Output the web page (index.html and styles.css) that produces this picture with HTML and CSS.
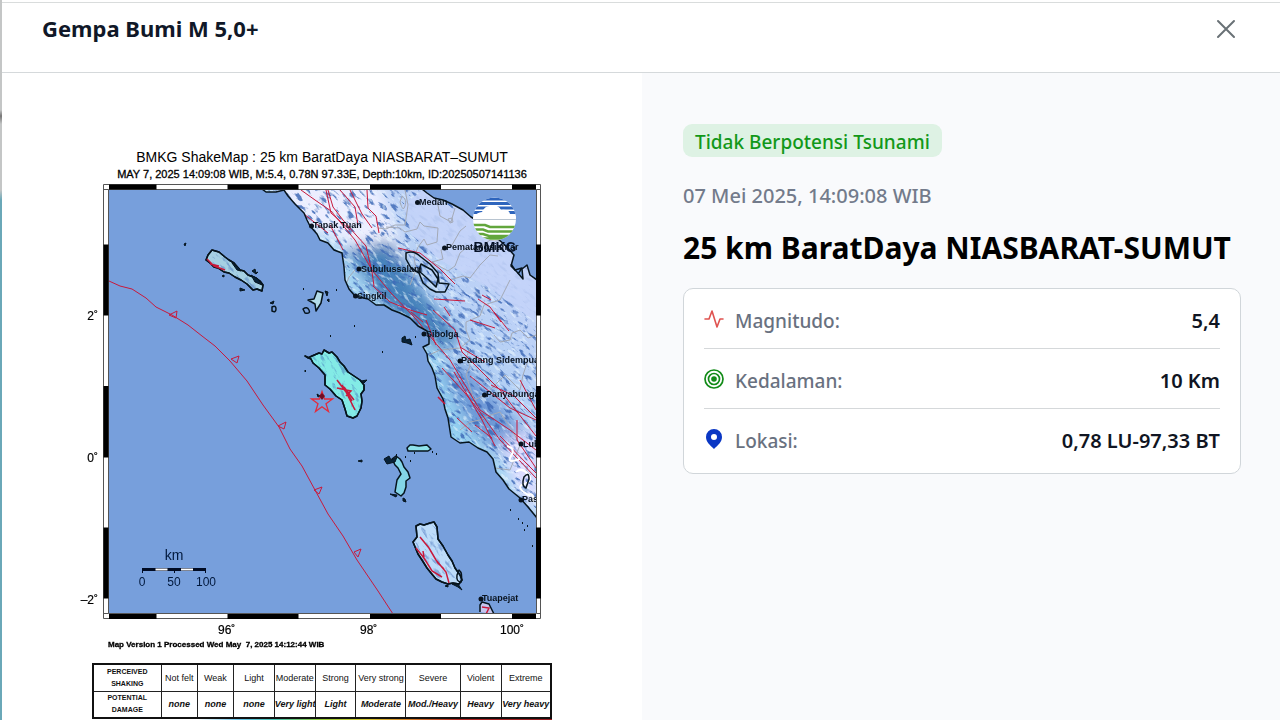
FILE: index.html
```html
<!DOCTYPE html>
<html lang="id">
<head>
<meta charset="utf-8">
<meta name="viewport" content="width=device-width, initial-scale=1">
<title>Gempa Bumi M 5,0+</title>
<link rel="stylesheet" href="styles.css">
</head>
<body>
<main class="modal">
  <header class="modal-header">
    <h1>Gempa Bumi M 5,0+</h1>
    <button class="close" type="button" aria-label="Tutup"><svg viewBox="0 0 20 20"><path d="M2 2 18 18M18 2 2 18"/></svg></button>
  </header>
  <div class="modal-body">
    <figure class="shakemap">
      <svg class="map" viewBox="80 145 485 507" role="img" aria-label="ShakeMap">
        <defs>
          <clipPath id="frame"><rect x="109" y="190" width="427" height="424"/></clipPath>
          <path id="mainland" d="M262 189 L266 192 276 192 284 190 288 196 295 204 300 209 304 213 307 220 310 226 317 234 320 240 328 243 334 250 342 253 344 267 345 280 349 289 355 296 368 299 376 305 384 305 392 310 400 313 410 318 418 326 427 331 429 338 429 344 423 347 427 354 428 361 432 368 435 376 437 388 443 399 445 409 448 418 451 437 460 443 469 442 478 448 487 452 493 459 496 472 503 480 509 489 520 498 528 507 537 518 V280 L530 275 527 265 522 269 523 279 517 272 511 266 514 255 506 246 497 238 488 230 480 222 471 217 463 210 452 204 443 200 434 198 427 193 422 189Z"/>
          <clipPath id="land"><use href="#mainland"/></clipPath>
          <clipPath id="isles">
            <path id="nias" d="M305 356 308 358 312 356 319 353 322 354 324 350 329 353 332 352 337 357 340 362 344 366 348 372 354 376 360 380 364 385 364 390 361 394 362 401 361 408 357 416 353 418 347 416 345 409 342 400 336 396 330 389 325 385 325 375 319 368 313 363 311 359Z"/>
            <path id="siberut" d="M416 526 420 524 424 525 430 523 434 522 437 527 438 539 443 546 448 555 452 561 455 568 460 575 462 580 459 584 453 583 448 584 442 582 436 579 431 573 427 568 422 560 418 554 413 542 417 537Z"/>
            <path id="simeulue" d="M206 260 208 255 212 250 219 252 225 257 229 260 234 263 240 270 244 271 248 275 256 278 260 281 263 285 262 291 257 289 253 290 247 284 241 280 235 277 229 273 224 272 218 268 214 267 210 263Z"/>
          </clipPath>
          <linearGradient id="landTone" gradientUnits="userSpaceOnUse" x1="345" y1="340" x2="480" y2="230">
            <stop offset="0" stop-color="#9bdcf2"/><stop offset=".45" stop-color="#b0cff4"/><stop offset="1" stop-color="#c3d3f8"/>
          </linearGradient>
          <filter id="ridges" x="0" y="0" width="1" height="1" color-interpolation-filters="sRGB">
            <feTurbulence type="fractalNoise" baseFrequency=".1 .3" numOctaves="4" seed="8"/>
            <feColorMatrix values="0 0 0 0 .25  0 0 0 0 .42  0 0 0 0 .72  0 6 0 0 -3.200"/>
          </filter>
          <filter id="snow" x="0" y="0" width="1" height="1" color-interpolation-filters="sRGB">
            <feTurbulence type="fractalNoise" baseFrequency=".12 .34" numOctaves="3" seed="21"/>
            <feColorMatrix values="0 0 0 0 .92  0 0 0 0 .97  0 0 0 0 1  6 0 0 0 -3.300"/>
          </filter>
          <filter id="soften"><feGaussianBlur stdDeviation="7"/></filter>
        </defs>

        <g class="map-heading">
          <text x="322" y="162" class="t14">BMKG ShakeMap : 25 km BaratDaya NIASBARAT–SUMUT</text>
          <text x="322" y="178" class="t11">MAY 7, 2025 14:09:08 WIB, M:5.4, 0.78N 97.33E, Depth:10km, ID:20250507141136</text>
        </g>

        <rect x="109" y="190" width="427" height="424" fill="#779fdc"/>
        <g clip-path="url(#frame)">
          <use href="#mainland" fill="url(#landTone)"/>
          <g clip-path="url(#land)">
            <g filter="url(#soften)">
              <path d="M260 180H380L405 255 360 250 310 230Z" fill="#eceeff"/>
              <path d="M345 250 390 240 420 290 460 340 440 350 390 310Z" fill="#3474b0" opacity=".85"/>
              <path d="M440 370 465 365 540 450 530 480 470 430Z" fill="#5a86cc" opacity=".75"/>
              <path d="M500 440 540 430V520L515 490Z" fill="#dedcff"/>
              <path d="M415 345 435 350 450 400 475 450 445 440Z" fill="#8fcdf0" opacity=".9"/>
            </g>
            <g transform="rotate(40 400 350)">
              <rect x="180" y="200" width="500" height="260" filter="url(#ridges)" opacity=".85"/>
              <rect x="180" y="200" width="500" height="260" filter="url(#snow)" opacity=".55"/>
            </g>
            <path d="M423 190 440 203 471 217 514 255 536 280V322L490 288 440 260 412 235 403 205Z" fill="#c3d3f8" opacity=".9"/>
            <g class="borders">
              <path d="M405 190 408 205 405 225 395 225 386 229 378 228M386 227 400 228 405 232 417 229 420 222 424 226 438 228 437 242 427 245 424 239 418 247 414 257 416 270 410 285M437 200 440 216 451 222 455 208M466 226 460 231 452 245 441 250 443 259 432 262 448 271 455 266 460 253 466 248 477 250 490 240 507 242M450 280 463 276 470 278 480 265 490 255 498 256M344 290 349 277 355 270M429 355 440 350 460 348 470 340 466 330 466 322 480 316 484 305 500 300 510 280M494 335 500 342 510 340 512 333 520 330 528 338 536 335M470 348 466 358 470 366 466 375 474 400 483 396 490 390 498 382 505 375 520 390 523 375 528 360M460 430 470 422 480 420 488 416 500 412 512 430 520 445 510 470 495 468 M402 196q5 3 3 10t-5-4zM448 219l4-1 1 4-3 1z"/>
            </g>
            <g class="faults">
              <path d="M301 190 315 200 331 211 355 240 372 270 390 292 415 318 438 346 450 360 480 410 510 430 536 450"/>
              <path d="M328 190 333 207 343 220 356 235 366 246 372 272 374 286M340 190 355 207 358 225M350 190 362 214 372 228M367 190 368 208 376 216 379 233M326 190 331 213 350 230M330 225 338 240 343 250M304 214 328 233M398 248 420 253 440 269 455 284M373 286 390 302 410 310 427 315M434 299 465 301M478 299 490 307 501 322M433 310 455 330 462 352 500 390 536 436M442 368 465 393 480 412 500 440 536 478M454 372 482 420 495 446M470 320 495 328M494 312 509 331M470 376 510 408 536 420M460 347 485 362M491 385 514 396 536 418M475 425 492 438M457 418 472 432M517 420 517 440 536 468M500 436 528 465 536 473M411 312 423 322M426 320 436 345M444 307 450 316M482 295 491 300M520 380 536 410"/>
            </g>
            <g fill="none" stroke="#fff" stroke-width="2"><path d="M507 446q9 2 4 10t9 3M516 472q6-5 12 2t-4 10 6 12M527 495q8-3 6 7"/></g>
          </g>
          <use href="#mainland" class="coast"/>
          <g class="coast"><path d="M406 253q8-3 15 4l9 7 8 9 1 10 10 1-4 8h-9l-6-3-7-6-4-10-8-5-5-9zM421 264l-2 7 9 8 8 8 2-8-6-9zM524 477q5-6 5 2l-3 9q-5-2-2-11zM511 264l4 6 7-2-4 6"/></g>

          <g class="coast">
            <use href="#nias" fill="#83ebe6"/><use href="#siberut" fill="#bddcf9"/><use href="#simeulue" fill="#a5d0e3"/>
            <path d="M407 448 410 445 413 445 419 446 427 445 431 449 428 451 418 451 408 451Z" fill="#8fe2eb"/>
            <path d="M392 459 396 456 400 459 402 462 404 467 408 472 410 478 406 481 406 487 404 493 401 496 395 492 397 480 401 474 398 468 395 465Z" fill="#83d5e7"/>
            <path d="M480 612 480 605 482 602 489 604 494 614" fill="#c4c6ee"/>
            <path d="M308 300 314 299 317 291 323 293 321 303 316 311 315 304Z" fill="#b2dce9"/>
            <path d="M303 309q4-3 6 1t-4 3zM272 307q4-2 4 2t-4 2zM459 570q4 3 2 12-5 0-4-7z"/>
          </g>
          <g clip-path="url(#isles)">
            <g transform="rotate(55 400 350)"><rect x="180" y="200" width="500" height="480" filter="url(#ridges)" opacity=".45"/></g>
          </g>
          <use href="#nias" class="coast"/><use href="#siberut" class="coast"/><use href="#simeulue" class="coast"/>
          <g class="islets">
            <path d="M184 244l2-1-1 3zM270 303l4-2-1 3zM325 291l3 1-1 4zM327 300l2-1v3zM402 338l3-2 1 4 4-1 2 6-5-2-5-1zM384 459l5-3 2 4 6-3-2 5-8 2zM358 461l4-1v2zM252 271l3-2 1 4 2-1-2 2zM222 276l2-1v2zM240 288l5 2-5 1zM232 263l6 4 3 4-4-1zM251 275l7 4 4 6-7-3zM390 494l7 1-1 2zM403 498l2 1 1 3-3-1zM452 584l6 0 4 6-4-3zM445 586l3-1v2zM305 370l1 1-1 1zM361 381l6-1-3 3zM317 394l3 2-2 1z"/>
            <path class="dotted" d="M354 326h1M330 336h1M382 352h1M414 453h1M432 452h1M436 454h1M396 455h1M405 457h1M410 461h1M510 510h1M518 519h1M522 523h1M524 530h1M527 526h1M532 546h1M303 289h1M336 290h1M415 337h1"/>
          </g>
          <g class="faults thick"><path d="M337 380 346 392 355 410M342 385 352 401M337 388 351 391 346 396M344 387 354 400M207 259 214 266 225 270M210 264 219 266M416 548 424 558 432 571 442 577M420 537 429 548 436 560 446 572 449 583M424 557 423 551M437 562 444 569M482 607 489 608 486 614M438 397 445 404"/></g>
          <path class="faults" d="M109 281 120 286 132 289 146 298 156 307 172 315 188 325 202 336 215 346 230 361 247 381 263 405 279 427 290 449 302 466 315 490 328 514 343 536 357 560 378 591 393 614"/>
          <path class="faults" d="M169 315 177 311 176 318ZM231 359 239 356 237 363ZM278 426 286 422 284 429ZM314 490 322 487 319 494ZM354 552 361 549 358 557Z"/>
          <path d="M322 391.500 324.500 399H332.500L326 403.700 328.500 411.500 322 406.800 315.500 411.500 318 403.700 311.500 399H319.500Z" fill="none" stroke="#e42b3c" stroke-width="1.300"/>
          <path d="M322 393l3 3-3 4-3-4z" fill="#700d23"/>

          <g>
            <clipPath id="logo"><circle cx="494.500" cy="219" r="21.500"/></clipPath>
            <g clip-path="url(#logo)">
              <path fill="#fff" d="M470 196h50v46h-50z"/>
              <path d="M470 199h50M470 203.500h50M470 208h50M470 212.500h50" stroke="#2e65bd" stroke-width="3"/>
              <path d="M473 218q4-6 9-6 3-7 9-6 7-2 10 4 8-1 9 4 6 0 7 4z" fill="#fff"/>
              <path d="M471 219.500h48" stroke="#b8c4d0"/>
              <path d="M471 225h14l5 2h29M471 229.500h12l5 2h30M471 234h12l6 2h29M477 238.500h35" fill="none" stroke="#62a63c" stroke-width="2.500"/>
            </g>
            <text x="495" y="252" class="brand">BMKG</text>
          </g>
          <g class="cities">
            <circle cx="417.500" cy="202.500" r="2.500"/><text x="419" y="205">Medan</text>
            <circle cx="311.500" cy="226" r="2.500"/><text x="313" y="228">Tapak Tuan</text>
            <circle cx="444.500" cy="248" r="2.500"/><text x="446" y="250">Pematangsiantar</text>
            <circle cx="359" cy="269" r="2.500"/><text x="361" y="272">Subulussalam</text>
            <circle cx="355.500" cy="296" r="2.500"/><text x="357" y="299">Singkil</text>
            <circle cx="424" cy="334" r="2.500"/><text x="426" y="337">Sibolga</text>
            <circle cx="460" cy="361" r="2.500"/><text x="461" y="363">Padang Sidempuan</text>
            <circle cx="484.500" cy="395" r="2.500"/><text x="486" y="397">Panyabungan</text>
            <circle cx="521" cy="444" r="2.500"/><text x="523" y="447">Lubuk</text>
            <circle cx="521" cy="500" r="2.500"/><text x="522" y="502">Pasaman</text>
            <circle cx="481" cy="599" r="2.500"/><text x="482" y="601">Tuapejat</text>
          </g>
          <g class="scale">
            <text x="174" y="560" class="t14">km</text>
            <path d="M142 569.500h64" stroke="#000b24" stroke-width="3"/>
            <path d="M155.500 569.500h12M181 569.500h12" stroke="#fff" stroke-width="2"/>
            <path d="M142.500 569v4M174.500 569v4M205.500 569v4" stroke="#000b24"/>
            <text x="142" y="586" class="t12">0</text><text x="174" y="586" class="t12">50</text><text x="206" y="586" class="t12">100</text>
          </g>
        </g>
        <g fill="none">
          <path d="M103.500 184.500h437v434h-437zM108.500 189.500h428v424h-428zM103.500 189.500h5M536.500 189.500h4M103.500 613.500h5M536.500 613.500h4" stroke="#555"/>
          <path d="M109 187H156.500M227.500 187H298.500M370 187H441M512 187H536M109 616.500H156.500M227.500 616.500H298.500M370 616.500H441M512 616.500H536M106 244.500V315.500M106 386V457.500M106 527.500V598.500M538.500 244.500V315.500M538.500 386V457.500M538.500 527.500V598.500" stroke="#000" stroke-width="5"/>
        </g>
        <g class="axis">
          <text x="218" y="634">96˚</text><text x="360" y="634">98˚</text><text x="500" y="634">100˚</text>
          <text x="98" y="320" class="end">2˚</text><text x="98" y="462" class="end">0˚</text><text x="98" y="604" class="end">–2˚</text>
        </g>
        <text x="108" y="647" class="version">Map Version 1 Processed Wed May&#160; 7, 2025 14:12:44 WIB</text>
      </svg>
      <table class="intensity">
        <colgroup><col class="c69"><col class="c36"><col class="c36"><col class="c40"><col class="c42"><col class="c40"><col class="c52"><col class="c53"><col class="c43"><col class="c49"></colgroup>
        <tr><th scope="row">PERCEIVED<br>SHAKING</th><td>Not felt</td><td>Weak</td><td>Light</td><td>Moderate</td><td>Strong</td><td>Very strong</td><td>Severe</td><td>Violent</td><td>Extreme</td></tr>
        <tr class="damage"><th scope="row">POTENTIAL<br>DAMAGE</th><td>none</td><td>none</td><td>none</td><td>Very light</td><td>Light</td><td>Moderate</td><td>Mod./Heavy</td><td>Heavy</td><td>Very heavy</td></tr>
      </table>
      <div class="ramp"></div>
    </figure>
    <section class="details">
      <span class="badge">Tidak Berpotensi Tsunami</span>
      <p class="time">07 Mei 2025, 14:09:08 WIB</p>
      <h2>25 km BaratDaya NIASBARAT-SUMUT</h2>
      <dl class="facts">
        <div><dt><svg viewBox="0 0 20 20"><path d="M1 10h4L8 2l5 16 3-8h3" fill="none" stroke="#df5350" stroke-width="1.600" stroke-linejoin="round" stroke-linecap="round"/></svg>Magnitudo:</dt><dd>5,4</dd></div>
        <div><dt><svg viewBox="0 0 20 20"><g fill="none" stroke="#128b18" stroke-width="1.700"><circle cx="10" cy="10" r="9"/><circle cx="10" cy="10" r="5.500"/></g><circle cx="10" cy="10" r="2.800" fill="#128b18"/></svg>Kedalaman:</dt><dd>10 Km</dd></div>
        <div><dt><svg viewBox="0 0 20 20"><path d="M10 0a8 8 0 0 0-8 8c0 5 4 8 8 12 4-4 8-7 8-12a8 8 0 0 0-8-8Zm0 5a3 3 0 1 1 0 6 3 3 0 0 1 0-6Z" fill="#0a37c4" fill-rule="evenodd"/></svg>Lokasi:</dt><dd>0,78 LU-97,33 BT</dd></div>
      </dl>
    </section>
  </div>
</main>
</body>
</html>
```
FILE: styles.css
```css
* { box-sizing: border-box; }
body {
  margin: 0;
  height: 100vh;
  overflow: hidden;
  padding: 2px 0 0 2px;
  font-family: "Noto Sans", "Open Sans", sans-serif;
  background: #fff linear-gradient(#c4c6c6 0 110px, #777 116px, #c4c6c6 124px 190px, #6aa8b8 200px) 0 0 / 2px 100% no-repeat;
}
.modal {
  height: 100%;
  display: flex;
  flex-direction: column;
  background: #fff;
  border-top: 1px solid #d9dcdc;
}
.modal-header {
  display: flex;
  justify-content: space-between;
  align-items: flex-start;
  padding: 10px 44px 28px 40px;
  border-bottom: 1px solid #d5d9db;
}
h1 { margin: 0; font-size: 22px; line-height: 31px; font-weight: 700; color: #101828; }
.close {
  display: flex;
  margin: 6px 0 0;
  padding: 0;
  border: 0;
  background: none;
}
.close svg { width: 20px; height: 20px; stroke: #697176; stroke-width: 2; stroke-linecap: round; }
.modal-body {
  flex: 1;
  min-height: 0;
  display: grid;
  grid-template-columns: calc(50% + 1px) 1fr;
}
.shakemap { width: 100%; max-width: 640px; margin: 0 auto; padding: 72px 77px 0 78px; }
.map { display: block; width: 100%; font-family: "Liberation Sans", Arial, sans-serif; }
.map-heading text, .scale text { text-anchor: middle; }
.t14 { font-size: 14px; }
.t12 { font-size: 12px; }
.t11 { font-size: 11px; }
.map-heading .t11 { stroke: #000; stroke-width: .3px; }
.scale { fill: #00183c; }
.brand { font-size: 14px; font-weight: 700; text-anchor: middle; fill: #071328; }
.cities { font-size: 9px; font-weight: 700; fill: #09131f; }
.axis { font-size: 12px; stroke: #000; stroke-width: .2px; }
.end { text-anchor: end; }
.version { font-size: 8px; font-weight: 700; stroke: #000; stroke-width: .3px; }
.coast { fill: none; stroke: #06141d; stroke-width: 1.500px; stroke-linejoin: round; }
.borders { fill: none; stroke: #a3a9b6; stroke-width: 1px; }
.faults { fill: none; stroke: #c8193b; stroke-width: 1px; }
.thick { stroke-width: 1.500px; }
.islets { fill: #082238; stroke: #06141d; stroke-width: 1px; }
.dotted { stroke-width: 2px; }
.intensity {
  width: calc(100% - 25px);
  margin: 11px 13px 0 12px;
  table-layout: fixed;
  border-collapse: collapse;
  border: 2px solid #111;
  font: 9px/12px "Liberation Sans", Arial, sans-serif;
  color: #111;
}
.intensity th, .intensity td { height: 27px; padding: 0; border: 1px solid #222; text-align: center; white-space: nowrap; overflow: hidden; }
.intensity th { font-size: 7px; }
.damage td { font-weight: 700; font-style: italic; }
.c69 { width: 15%; } .c36 { width: 8%; } .c40 { width: 9%; } .c42 { width: 9%; }
.c43 { width: 9%; } .c49 { width: 11%; } .c52 { width: 11%; } .c53 { width: 12%; }
.ramp {
  height: 20px;
  margin: 0 13px 0 12px;
  background: linear-gradient(90deg, #fff 15%, #fff 23%, #67c4e8 32%, #48c5b2 40%, #98cd35 50%, #d8c72d 60%, #d47525 70%, #b62421 80%, #961a20);
}
.details { padding: 51px 39px 0 41px; background: #f9fafc; min-width: 0; }
.badge {
  display: table;
  padding: 5px 12px 1px;
  border-radius: 9px;
  background: #def2e4;
  color: #129819;
  font-size: 19px;
  line-height: 27px;
  font-weight: 500;
}
.time { margin: 24px 0 0; font-size: 20px; line-height: 30px; font-weight: 500; color: #737b8b; }
h2 { margin: 16px 0 19px; font-size: 30px; line-height: 42px; font-weight: 700; color: #000; white-space: nowrap; }
.facts { margin: 0; padding: 0 20px; border: 1px solid #d1d6da; border-radius: 10px; background: #fff; }
.facts div { display: flex; justify-content: space-between; align-items: center; padding: 17px 0 12px; line-height: 30px; border-bottom: 1px solid #d5d8da; }
.facts div:last-child { padding-bottom: 17px; border-bottom: 0; }
dt { display: flex; align-items: center; gap: 11px; font-size: 19px; color: #697180; font-weight: 500; }
dt svg { width: 20px; height: 20px; margin-bottom: 4px; }
dd { margin: 0; font-size: 20px; font-weight: 600; color: #101522; }
```
